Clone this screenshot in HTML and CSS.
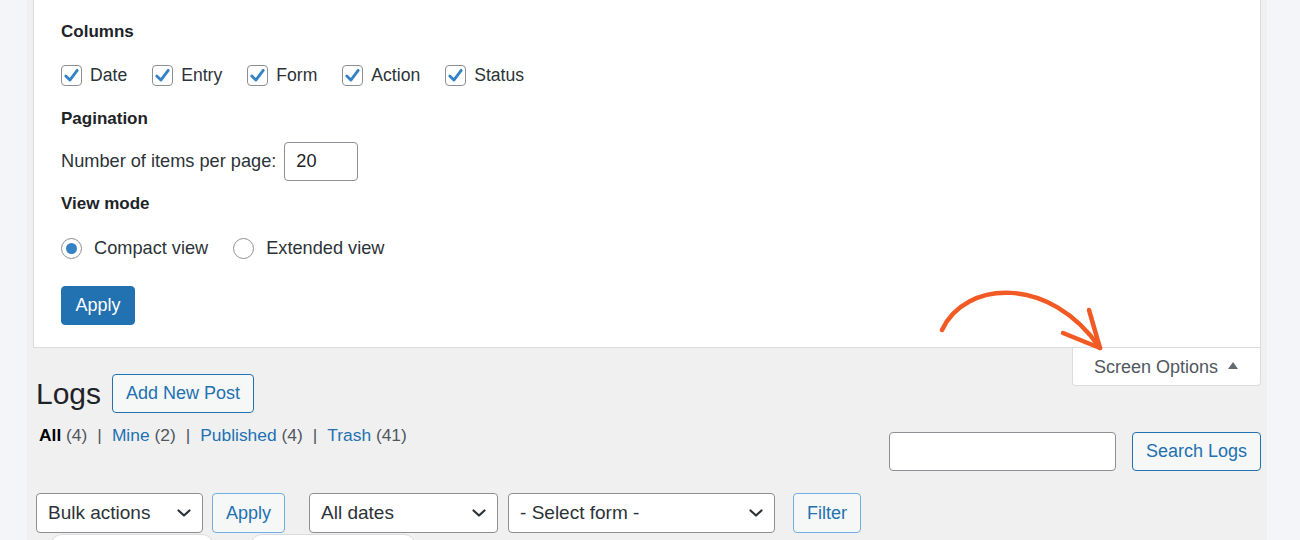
FILE: index.html
```html
<!DOCTYPE html>
<html lang="en">
<head>
    <meta charset="UTF-8">
    <meta name="viewport" content="width=device-width, initial-scale=1.0">
    <title>Logs ‹ Screen Options</title>
    <link rel="stylesheet" href="styles.css">
</head>
<body>
    <div class="wrap">
        <!-- screen options panel (open) -->
        <div class="screen-meta">
            <h5>Columns</h5>
            <div class="check-row">
                <label class="check"><span class="box"><svg viewBox="0 0 20 20"><path d="M4 10.5 L8.3 14.8 L16 4.5"/></svg></span>Date</label>
                <label class="check"><span class="box"><svg viewBox="0 0 20 20"><path d="M4 10.5 L8.3 14.8 L16 4.5"/></svg></span>Entry</label>
                <label class="check"><span class="box"><svg viewBox="0 0 20 20"><path d="M4 10.5 L8.3 14.8 L16 4.5"/></svg></span>Form</label>
                <label class="check"><span class="box"><svg viewBox="0 0 20 20"><path d="M4 10.5 L8.3 14.8 L16 4.5"/></svg></span>Action</label>
                <label class="check"><span class="box"><svg viewBox="0 0 20 20"><path d="M4 10.5 L8.3 14.8 L16 4.5"/></svg></span>Status</label>
            </div>

            <h5 class="pag">Pagination</h5>
            <div class="per-page">
                <span>Number of items per page:</span>
                <span class="num-input">20</span>
            </div>

            <h5 class="mode">View mode</h5>
            <div class="radio-row">
                <label class="radio"><span class="circle checked"></span>Compact view</label>
                <label class="radio"><span class="circle"></span>Extended view</label>
            </div>

            <button class="button-primary">Apply</button>
        </div>

        <div class="screen-links">
            <div class="tab">Screen Options <span class="tri"></span></div>
        </div>

        <svg class="arrow" viewBox="0 0 180 75" width="180" height="75">
            <path d="M12 50 C 35 0, 120 -5, 170 68"/>
            <path d="M133 53 L170 68 L159 30"/>
        </svg>

        <div class="heading">
            <h1>Logs</h1>
            <a class="button">Add New Post</a>
        </div>

        <div class="list-top">
            <ul class="subsubsub">
                <li><b>All</b> <span class="count">(4)</span></li>
                <li class="sep">|</li>
                <li><a>Mine</a> <span class="count">(2)</span></li>
                <li class="sep">|</li>
                <li><a>Published</a> <span class="count">(4)</span></li>
                <li class="sep">|</li>
                <li><a>Trash</a> <span class="count">(41)</span></li>
            </ul>
            <div class="search-box">
                <span class="search-input"></span>
                <a class="button">Search Logs</a>
            </div>
        </div>

        <div class="tablenav">
            <div class="select bulk">Bulk actions <svg viewBox="0 0 14 8"><path d="M1.5 1.5 L7 6.5 L12.5 1.5"/></svg></div>
            <a class="button small">Apply</a>
            <div class="select dates">All dates <svg viewBox="0 0 14 8"><path d="M1.5 1.5 L7 6.5 L12.5 1.5"/></svg></div>
            <div class="select forms">- Select form - <svg viewBox="0 0 14 8"><path d="M1.5 1.5 L7 6.5 L12.5 1.5"/></svg></div>
            <a class="button small filter">Filter</a>
        </div>

        <div class="pills">
            <span class="pill"></span>
            <span class="pill second"></span>
        </div>
    </div>
</body>
</html>
```

FILE: styles.css
```css
body {
    margin: 0;
    background-color: #f4f5f9;
    font-family: "Liberation Sans", Arial, sans-serif;
    font-size: 18px;
    color: #3c434a;
    height: 540px;
    overflow: hidden;
}
.wrap {
    position: relative;
    margin: 0 33px 0 27px;
    padding: 0 6px;
    height: 540px;
    background-color: #f0f0f1;
    overflow: hidden;
}

/* screen options panel */
.screen-meta {
    background: #fff;
    border: 1px solid #dcdcde;
    border-top: none;
    height: 348px;
    box-sizing: border-box;
    padding: 20px 27px 0 27px;
}
h5 {
    margin: 0;
    font-size: 17px;
    line-height: 24px;
    font-weight: bold;
    color: #1d2327;
}
.check-row, .radio-row {
    display: flex;
    gap: 25px;
    margin-top: 19px;
    height: 24px;
    align-items: center;
    font-size: 17.6px;
}
.check, .radio {
    display: flex;
    align-items: center;
    gap: 8px;
    color: #2c3338;
}
.radio {
    gap: 12px;
}
.box {
    width: 21px;
    height: 21px;
    box-sizing: border-box;
    border: 1px solid #8c8f94;
    border-radius: 4px;
    display: flex;
    align-items: center;
    justify-content: center;
}
.box svg {
    width: 19px;
    height: 19px;
    fill: none;
    stroke: #3582c4;
    stroke-width: 3;
    stroke-linecap: round;
    stroke-linejoin: round;
}
.pag {
    margin-top: 20px;
}
.per-page {
    display: flex;
    align-items: center;
    gap: 8px;
    margin-top: 11px;
    color: #2c3338;
    font-size: 18.2px;
}
.num-input {
    width: 74px;
    height: 39px;
    box-sizing: border-box;
    border: 1px solid #8c8f94;
    border-radius: 4px;
    padding-left: 11px;
    line-height: 37px;
    color: #1d2327;
}
.mode {
    margin-top: 11px;
}
.radio-row {
    margin-top: 20px;
    font-size: 18.2px;
}
.circle {
    width: 21px;
    height: 21px;
    box-sizing: border-box;
    border: 1px solid #8c8f94;
    border-radius: 50%;
    display: flex;
    align-items: center;
    justify-content: center;
}
.circle.checked::before {
    content: "";
    width: 11px;
    height: 11px;
    border-radius: 50%;
    background: #3582c4;
}
.button-primary {
    display: block;
    margin-top: 26px;
    height: 39px;
    width: 74px;
    background: #2271b1;
    border: 1px solid #2271b1;
    border-radius: 4px;
    color: #fff;
    font-family: inherit;
    font-size: 18px;
    padding: 0;
}

/* screen options tab */
.screen-links {
    float: right;
}
.tab {
    width: 189px;
    height: 38px;
    box-sizing: border-box;
    background: #fff;
    border: 1px solid #dcdcde;
    border-top: none;
    border-radius: 0 0 4px 4px;
    padding-left: 21px;
    line-height: 36px;
    color: #50575e;
    display: flex;
    align-items: center;
    gap: 10px;
}
.tri {
    width: 0;
    height: 0;
    border-left: 5.5px solid transparent;
    border-right: 5.5px solid transparent;
    border-bottom: 7px solid #646970;
    margin-top: -2px;
}
.arrow {
    position: absolute;
    left: 903px;
    top: 280px;
    fill: none;
    stroke: #f15a24;
    stroke-width: 4.5;
    stroke-linecap: round;
    stroke-linejoin: round;
    overflow: visible;
}

/* page heading */
.heading {
    display: flex;
    align-items: center;
    gap: 11px;
    padding-top: 26px;
    height: 39px;
    box-sizing: content-box;
}
h1 {
    margin: 0;
    font-size: 30px;
    font-weight: normal;
    color: #1d2327;
    margin-left: 3px;
}
.button {
    display: inline-flex;
    align-items: center;
    height: 39px;
    box-sizing: border-box;
    padding: 0 13px;
    border: 1px solid #2271b1;
    border-radius: 4px;
    background: #f6f7f7;
    color: #2271b1;
}
.list-top {
    display: flex;
    justify-content: space-between;
    align-items: flex-start;
    margin-top: 11px;
}
.subsubsub {
    list-style: none;
    margin: 0 0 0 6px;
    padding: 0;
    display: flex;
    gap: 10px;
    line-height: 22px;
    font-size: 17.4px;
}
.subsubsub b {
    color: #000;
}
.subsubsub a {
    color: #2271b1;
}
.count, .sep {
    color: #50575e;
}
.search-box {
    display: flex;
    gap: 16px;
    margin-top: 8px;
}
.search-input {
    width: 227px;
    height: 39px;
    box-sizing: border-box;
    background: #fff;
    border: 1px solid #8c8f94;
    border-radius: 4px;
}

/* bulk actions + filters */
.tablenav {
    display: flex;
    align-items: center;
    margin-top: 22px;
    margin-left: 3px;
    height: 40px;
}
.select {
    height: 40px;
    box-sizing: border-box;
    background: #fff;
    border: 1px solid #8c8f94;
    border-radius: 4px;
    padding: 0 11px 0 11px;
    display: flex;
    align-items: center;
    justify-content: space-between;
    color: #2c3338;
    font-size: 19px;
}
.select svg {
    width: 14px;
    height: 8px;
    fill: none;
    stroke: #2c3338;
    stroke-width: 2.2;
    stroke-linecap: round;
    stroke-linejoin: round;
}
.bulk {
    width: 167px;
}
.button.small {
    height: 40px;
    margin-left: 9px;
    padding: 0 13px;
    border-color: #72aee6;
}
.dates {
    width: 189px;
    margin-left: 24px;
}
.forms {
    width: 267px;
    margin-left: 10px;
}
.filter {
    margin-left: 18px !important;
}
.pills {
    display: flex;
    gap: 36px;
    margin-top: 1px;
    margin-left: 17px;
}
.pill {
    width: 162px;
    height: 30px;
    background: #fff;
    border: 1px solid #dcdcde;
    border-radius: 12px;
}
.pill.second {
    width: 164px;
}
```
